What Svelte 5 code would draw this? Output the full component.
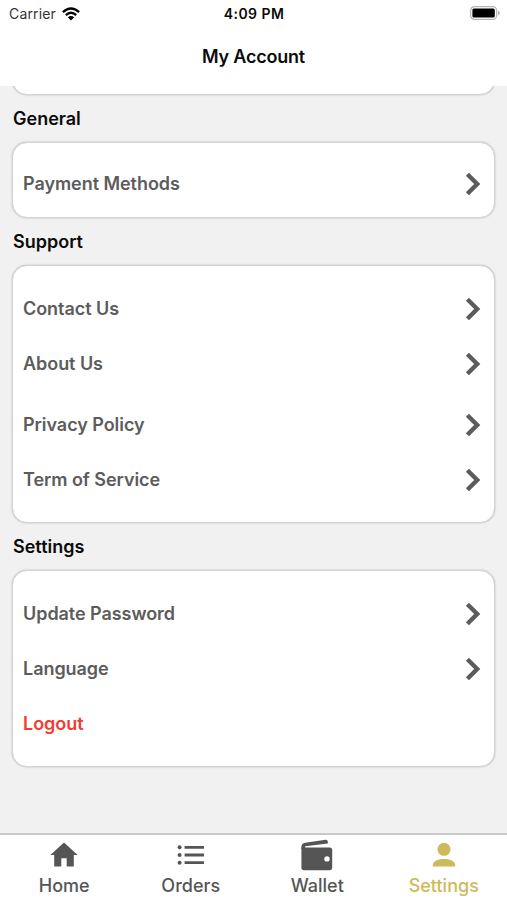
<script lang="ts">
  type Item = { label: string; danger?: boolean; spaced?: boolean };
  type Section = { id: string; title: string; items: Item[] };

  const sections: Section[] = [
    { id: 'general', title: 'General', items: [{ label: 'Payment Methods' }] },
    {
      id: 'support',
      title: 'Support',
      items: [
        { label: 'Contact Us' },
        { label: 'About Us' },
        { label: 'Privacy Policy', spaced: true },
        { label: 'Term of Service' }
      ]
    },
    {
      id: 'settings',
      title: 'Settings',
      items: [{ label: 'Update Password' }, { label: 'Language' }, { label: 'Logout', danger: true }]
    }
  ];

  const tabs = ['Home', 'Orders', 'Wallet', 'Settings'];

  let activeTab = $state('Settings');
</script>

<div class="screen">
  <header class="header">
    <div class="status-bar">
      <div class="carrier">
        <span>Carrier</span>
        <svg class="wifi" viewBox="0 0 18 14" width="18" height="14">
          <g fill="none" stroke="#000" stroke-width="2.4">
            <path d="M0.9 5.1Q9 -2 17.1 5.1" />
            <path d="M3.8 8.1Q9 3.6 14.2 8.1" />
          </g>
          <path d="M5.8 10.3Q9 7.6 12.2 10.3L9 13.6Z" />
        </svg>
      </div>
      <span class="time">4:09 PM</span>
      <svg class="battery" viewBox="0 0 30 14" width="30" height="14">
        <rect x="0.6" y="0.6" width="26" height="12.8" rx="3.8" fill="#fff" stroke="#b4b4b4" stroke-width="1.2" />
        <rect x="2.4" y="2.4" width="22.4" height="9.2" rx="1.6" />
        <path d="M28 4.8Q29.8 5.4 29.8 7T28 9.2Z" fill="#aaa" />
      </svg>
    </div>
    <h1 class="title">My Account</h1>
  </header>

  <main class="content">
    <div class="card previous"></div>

    {#each sections as section (section.id)}
      <h2 class="section-title">{section.title}</h2>
      <div class="card {section.id}">
        {#each section.items as item (item.label)}
          <button class="row" class:danger={item.danger} class:spaced={item.spaced}>
            <span>{item.label}</span>
            {#if !item.danger}
              <svg class="chevron" viewBox="0 0 16 24" width="16" height="24">
                <path d="M2.4 2.2L12.2 12L2.4 21.8" fill="none" stroke="#5c5c5c" stroke-width="4.4" />
              </svg>
            {/if}
          </button>
        {/each}
      </div>
    {/each}
  </main>

  <nav class="tab-bar">
    {#each tabs as tab (tab)}
      <button class="tab" class:active={activeTab === tab} onclick={() => (activeTab = tab)}>
        <svg viewBox="0 0 34 34" width="34" height="34" fill="currentColor">
          {#if tab === 'Home'}
            <path d="M17 4.6L30.6 17H26.8V28.6H19.7V20.2H14.3V28.6H7.2V17H3.4Z" />
          {:else if tab === 'Orders'}
            <circle cx="5.6" cy="9.3" r="2" />
            <circle cx="5.6" cy="17" r="2" />
            <circle cx="5.6" cy="24.7" r="2" />
            <path d="M10.6 7.9H30V10.7H10.6ZM10.6 15.6H30V18.4H10.6ZM10.6 23.3H30V26.1H10.6Z" />
          {:else if tab === 'Wallet'}
            <path
              fill-rule="evenodd"
              d="M1.4 9.4H29.6Q32.2 9.4 32.2 12V29.6Q32.2 32.2 29.6 32.2H4Q1.4 32.2 1.4 29.6ZM27 18.2A2.7 2.7 0 1 0 27 23.6A2.7 2.7 0 1 0 27 18.2Z"
            />
            <path d="M1.4 11V8.6Q1.5 5.4 5.2 4.7L25.6 1.8Q27.5 1.6 27.8 3.3V5.6L5.2 8.2V10Z" />
          {:else}
            <circle cx="17" cy="11.3" r="6.5" />
            <path d="M5.8 28.4V26.5C6.5 22.8 12 21 17 21S27.5 22.8 28.2 26.5V28.4Z" />
          {/if}
        </svg>
        <span>{tab}</span>
      </button>
    {/each}
  </nav>
</div>

<style>
  :global(body) {
    margin: 0;
  }

  .screen {
    display: flex;
    flex-direction: column;
    height: 900px;
    overflow: hidden;
    background: #f1f1f1;
    color: #0b0b0b;
    font-family: Inter, 'Liberation Sans', sans-serif;
  }

  button {
    border: none;
    background: none;
    font-family: inherit;
    cursor: pointer;
  }

  .header {
    flex: none;
    height: 86px;
    background: #fff;
  }

  .status-bar {
    display: grid;
    grid-template-columns: 1fr auto 1fr;
    align-items: center;
    height: 27px;
    padding: 0 7px 0 9px;
    font-size: 14px;
  }

  .carrier {
    display: flex;
    align-items: center;
    gap: 6px;
    letter-spacing: 0.15px;
    color: #333;
  }

  .time {
    margin-right: 1px;
    font-weight: 600;
    letter-spacing: 0.45px;
  }

  .battery {
    justify-self: end;
    margin-top: -1px;
  }

  .title {
    margin: 19px 0 0;
    font-size: 18px;
    font-weight: 600;
    letter-spacing: -0.2px;
    line-height: 22px;
    text-align: center;
  }

  .content {
    flex: 1;
    min-height: 0;
    padding: 0 12px;
    overflow: hidden;
  }

  .card {
    box-sizing: border-box;
    padding: 15px 13px 15px 10px;
    border: 1px solid #d4d4d4;
    border-radius: 15px;
    background: #fff;
    box-shadow: 0 0 2px rgba(0, 0, 0, 0.28);
  }

  .previous {
    height: 40px;
    margin-top: -31px;
  }

  .general {
    padding-top: 13px;
    padding-bottom: 6px;
  }

  .section-title {
    margin: 0 1px;
    font-size: 18px;
    font-weight: 600;
    line-height: 47px;
  }

  .row {
    display: flex;
    align-items: center;
    justify-content: space-between;
    width: 100%;
    height: 55px;
    padding: 0;
    font-size: 18px;
    font-weight: 600;
    letter-spacing: -0.05px;
    color: #5c5c5c;
  }

  .row.spaced {
    margin-top: 6px;
  }

  .row.danger {
    color: #f43b32;
  }

  .tab-bar {
    display: flex;
    flex: none;
    box-sizing: border-box;
    height: 67px;
    padding-left: 1px;
    border-top: 2px solid #c9c9c9;
    background: #fff;
  }

  .tab {
    display: flex;
    flex: 1;
    flex-direction: column;
    align-items: center;
    padding: 3px 0 0;
    font-size: 18px;
    font-weight: 500;
    line-height: 28px;
    color: #555;
  }

  .tab.active {
    color: #cfb95b;
  }
</style>
